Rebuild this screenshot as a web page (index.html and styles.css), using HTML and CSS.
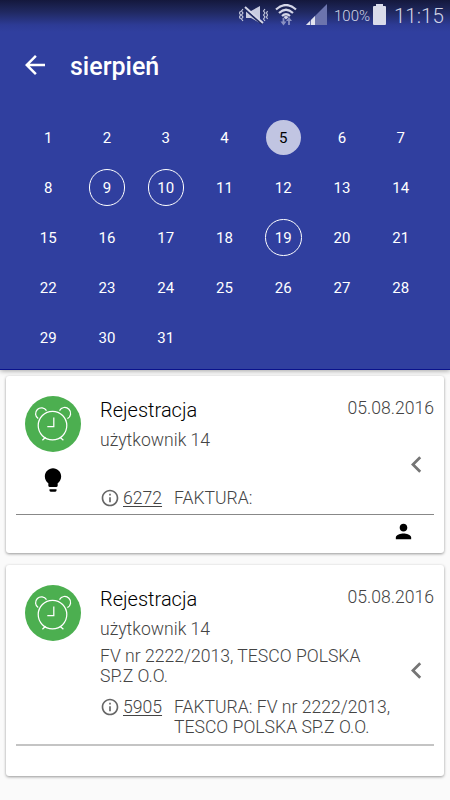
FILE: index.html
```html
<!DOCTYPE html>
<html lang="pl">
<head>
  <meta charset="UTF-8" />
  <meta name="viewport" content="width=device-width, initial-scale=1" />
  <title>Kalendarz - sierpień</title>
  <link rel="stylesheet" href="styles.css">
</head>
<body>

  <!-- Shared icons -->
  <svg class="sprite" aria-hidden="true">
    <symbol id="alarm" viewBox="0 0 56 56">
      <g fill="none" stroke="#fff" stroke-width="1.25">
        <circle cx="27.5" cy="29.6" r="14.3" />
        <path d="M28.8 21.5v9h-6.5" />
        <path d="M13.2 22.6A5.9 5.9 0 1 1 21.5 14.6" />
        <path d="M34.5 14.6A5.9 5.9 0 1 1 42.4 22.6" />
        <path d="M20.6 41.2L17.4 44.2M35 41.2L38.4 44.2" />
      </g>
    </symbol>
    <symbol id="info" viewBox="0 0 24 24">
      <path d="M11 17h2v-6h-2v6zm1-15C6.48 2 2 6.48 2 12s4.48 10 10 10 10-4.48 10-10S17.52 2 12 2zm0 18c-4.41 0-8-3.59-8-8s3.59-8 8-8 8 3.59 8 8-3.59 8-8 8zM11 9h2V7h-2v2z" />
    </symbol>
    <symbol id="chevron" viewBox="0 0 24 24">
      <path d="M15.41 7.41L14 6l-6 6 6 6 1.41-1.41L10.83 12z" />
    </symbol>
  </svg>

  <header class="header">
    <div class="statusbar">
      <svg class="mute" width="30" height="20" viewBox="0 0 30 20">
        <path d="M7 6h5l9-5v17l-9-5H7z" fill="#c9cce0" />
        <path d="M5 3.500l18 15.500" stroke="#202961" stroke-width="2" />
        <path d="M6 2l18 16" stroke="#d5d7e8" stroke-width="2" />
        <path d="M4 4L2.500 6 4 8l-1.500 2L4 12l-1.500 2L4 16M1.500 6l-1 2 1 2-1 2 1 2M26 4l-1.500 2L26 8l-1.500 2 1.500 2-1.500 2 1.500 2M28.500 6l-1 2 1 2-1 2 1 2" fill="none" stroke="#c9cce0" stroke-width="1.100" />
      </svg>
      <svg class="wifi" width="22" height="24" viewBox="0 0 22 24">
        <g fill="none" stroke="#d5d7e8" stroke-width="2.200">
          <path d="M1 5.500Q11-3.500 21 5.500" />
          <path d="M4 9Q11 2.500 18 9" />
          <path d="M7 12Q11 8.500 15 12" />
        </g>
        <path d="M8.500 13Q11 11 13.500 13L11 15.500z" fill="#d5d7e8" />
        <path d="M8.500 14v4M14 21v-5" stroke="#8a91c2" stroke-width="1.800" />
        <path d="M5.500 17.500h6l-3 4zM11 17h6l-3-4z" fill="#8a91c2" />
      </svg>
      <svg class="signal" width="21" height="21" viewBox="0 0 21 21">
        <path d="M0 21L21 0v21z" fill="#6c74ad" />
        <path d="M0 21l4-4v4zM5 21v-5l4-4v9z" fill="#e2e4ef" />
      </svg>
      <span class="percent">100%</span>
      <svg class="battery" width="13" height="21" viewBox="0 0 13 21">
        <path d="M0 3q0-1 1-1h2V0h7v2h2q1 0 1 1v17q0 1-1 1H1q-1 0-1-1z" fill="#d9dbea" />
      </svg>
      <span class="time">11:15</span>
    </div>

    <div class="toolbar">
      <svg class="back" width="30" height="30" viewBox="0 0 24 24">
        <path d="M20 11H7.830l5.590-5.590L12 4l-8 8 8 8 1.410-1.410L7.830 13H20v-2z" fill="#fff" />
      </svg>
      <h1>sierpień</h1>
    </div>

    <div class="calendar">
      <span>1</span><span>2</span><span>3</span><span>4</span><span class="selected">5</span><span>6</span><span>7</span>
      <span>8</span><span class="event">9</span><span class="event">10</span><span>11</span><span>12</span><span>13</span><span>14</span>
      <span>15</span><span>16</span><span>17</span><span>18</span><span class="event">19</span><span>20</span><span>21</span>
      <span>22</span><span>23</span><span>24</span><span>25</span><span>26</span><span>27</span><span>28</span>
      <span>29</span><span>30</span><span>31</span>
    </div>
  </header>

  <main class="list">
    <div class="card">
      <div class="card-body first">
        <div class="side">
          <svg class="avatar"><use href="#alarm" /></svg>
          <svg class="bulb" width="28" height="28" viewBox="0 0 24 24">
            <path d="M9 21c0 .55.45 1 1 1h4c.55 0 1-.45 1-1v-1H9v1zm3-19C8.140 2 5 5.140 5 9c0 2.380 1.190 4.470 3 5.740V17c0 .55.45 1 1 1h6c.55 0 1-.45 1-1v-2.260c1.810-1.270 3-3.360 3-5.740 0-3.860-3.140-7-7-7z" />
          </svg>
        </div>
        <div class="content">
          <div class="top">
            <h2>Rejestracja</h2>
            <span class="date">05.08.2016</span>
          </div>
          <p class="user">użytkownik 14</p>
          <div class="doc">
            <svg class="info"><use href="#info" /></svg>
            <a class="number">6272</a>
            <p>FAKTURA:</p>
          </div>
        </div>
        <svg class="chevron"><use href="#chevron" /></svg>
      </div>
      <div class="card-footer">
        <svg width="23" height="23" viewBox="0 0 24 24">
          <path d="M12 12c2.210 0 4-1.790 4-4s-1.790-4-4-4-4 1.790-4 4 1.790 4 4 4zm0 2c-2.670 0-8 1.340-8 4v2h16v-2c0-2.660-5.330-4-8-4z" />
        </svg>
      </div>
    </div>

    <div class="card">
      <div class="card-body second">
        <div class="side">
          <svg class="avatar"><use href="#alarm" /></svg>
        </div>
        <div class="content">
          <div class="top">
            <h2>Rejestracja</h2>
            <span class="date">05.08.2016</span>
          </div>
          <p class="user">użytkownik 14</p>
          <p class="desc">FV nr 2222/2013, TESCO POLSKA<br>SP.Z O.O.</p>
          <div class="doc">
            <svg class="info"><use href="#info" /></svg>
            <a class="number">5905</a>
            <p>FAKTURA: FV nr 2222/2013,<br>TESCO POLSKA SP.Z O.O.</p>
          </div>
        </div>
        <svg class="chevron"><use href="#chevron" /></svg>
      </div>
      <div class="card-footer"></div>
    </div>
  </main>

</body>
</html>
```
FILE: styles.css
```css
* {
  box-sizing: border-box;
}
body {
  margin: 0;
  height: 800px;
  overflow: hidden;
  font-family: Roboto, sans-serif;
  background: #fafafa;
  color: #444;
}
h1, h2, p {
  margin: 0;
}
svg {
  display: block;
  flex-shrink: 0;
}
.sprite {
  position: absolute;
  width: 0;
  height: 0;
}

/* Header */
.header {
  height: 370px;
  background: linear-gradient(#14183c 0, #202961 12px, #2d3b95 25px, #303f9f 32px);
  border-bottom: 1px solid #0a128c;
  box-shadow: 0 1px 5px rgba(0, 0, 0, 0.35);
  color: #fff;
}
.statusbar {
  display: flex;
  align-items: flex-start;
  height: 32px;
  padding: 4px 0 0 239px;
  color: #d0d3e6;
}
.mute {
  margin-top: 1px;
}
.wifi {
  margin-left: 6px;
}
.signal {
  margin-left: 9px;
}
.percent {
  width: 37px;
  margin-left: 7px;
  font-size: 15px;
  font-weight: 300;
  line-height: 24px;
}
.battery {
  margin-left: 2px;
}
.time {
  margin-left: 8px;
  font-size: 20.5px;
  font-weight: 300;
  line-height: 24px;
}
.toolbar {
  display: flex;
  align-items: center;
  height: 66px;
  padding-left: 20px;
}
.toolbar h1 {
  padding-top: 2px;
  margin-left: 20px;
  font-size: 25px;
  font-weight: 500;
}
.calendar {
  display: grid;
  grid-template-columns: repeat(7, 58.75px);
  grid-auto-rows: 50px;
  justify-content: center;
  place-items: center;
  margin: 14.5px 1px 0 0;
  font-size: 15px;
}
.calendar span {
  display: flex;
  align-items: center;
  justify-content: center;
  width: 37px;
  height: 37px;
  padding-top: 1px;
  border-radius: 50%;
}
.calendar .event {
  width: 36.5px;
  height: 36.5px;
  border: 1px solid #fff;
}
.calendar .selected {
  width: 35.5px;
  height: 35.5px;
  background: #c1c5e2;
  color: #000;
}

/* Cards */
.list {
  display: flex;
  flex-direction: column;
  gap: 12px;
  padding: 6px;
}
.card {
  padding: 0 10px;
  background: #fff;
  border-radius: 3px;
  box-shadow: 0 1px 3px rgba(0, 0, 0, 0.4);
}
.card-body {
  display: flex;
  position: relative;
  padding-top: 20px;
  border-bottom: 1px solid #888;
}
.first {
  height: 139px;
}
.second {
  height: 181px;
  border-bottom: 2px solid #c4c4c4;
}
.side {
  width: 84px;
  padding-left: 9px;
}
.avatar {
  width: 56px;
  height: 56px;
  border-radius: 50%;
  background: #4caf50;
}
.bulb {
  margin: 14px 0 0 13.5px;
  fill: #000;
}
.content {
  flex: 1;
  font-size: 17.6px;
  font-weight: 300;
  line-height: 20.5px;
}
.top {
  display: flex;
  justify-content: space-between;
}
.top h2 {
  padding-top: 3px;
  font-size: 20px;
  font-weight: 300;
  line-height: 23px;
  color: #000;
}
.date {
  padding-top: 2px;
}
.user {
  margin-top: 8px;
}
.desc {
  margin-top: 6px;
}
.doc {
  display: flex;
  margin-top: 10px;
}
.first .doc {
  margin-top: 37px;
}
.info {
  width: 20px;
  height: 20px;
  fill: #666;
}
.number {
  width: 39px;
  margin: 0 12px 0 3px;
  text-decoration: underline;
  text-underline-offset: 2px;
}
.chevron {
  position: absolute;
  right: 1px;
  top: 72px;
  width: 33px;
  height: 33px;
  fill: #757575;
}
.second .chevron {
  top: 89px;
}
.card-footer {
  display: flex;
  justify-content: flex-end;
  height: 38px;
  padding: 5px 19px 0 0;
}
.second + .card-footer {
  height: 30px;
}
```
